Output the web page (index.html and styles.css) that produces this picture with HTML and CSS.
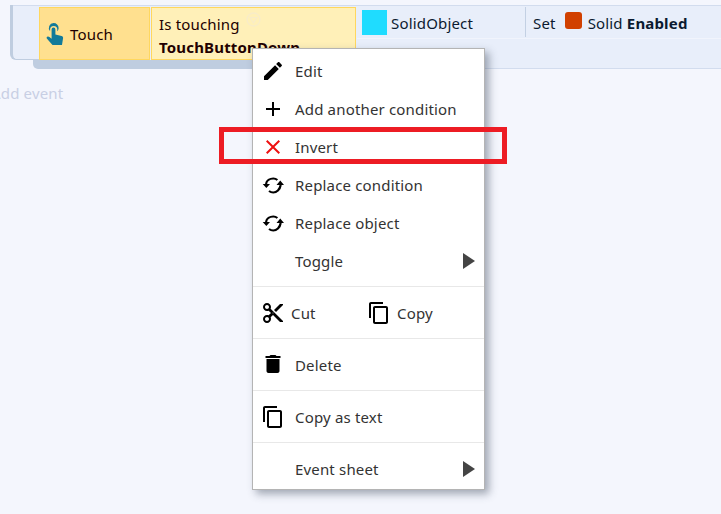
FILE: index.html
```html
<!DOCTYPE html>
<html lang="en">
<head>
<meta charset="utf-8">
<title>Event sheet</title>
<link rel="stylesheet" href="styles.css">
</head>
<body>
<div class="event">
  <div class="event-left">
    <div class="event-top">
      <div class="gutter"></div>
      <div class="conditions">
        <div class="cond-object">
          <svg class="touch-icon" width="20" height="24" viewBox="0 0 20 24"><path fill="#137a99" d="M7.600 1a5 5 0 0 1 5 5c0 1.400-.5 2.500-1.300 3.300V7.600a3.500 3.500 0 1 0-7.200 0v1.700A5 5 0 0 1 7.600 1z"/><path fill="#137a99" d="M5.600 7.400a1.900 1.900 0 0 1 3.800 0v5l6.200 1.500c1 .3 1.600 1.100 1.500 2.100L16 23H6.500L1 16.700c-.6-.8-.4-1.600.3-2 .7-.4 1.500-.2 2.100.3l2.200 1.800z"/></svg>
          <span>Touch</span>
        </div>
        <div class="cond-params">
          <div class="cond-line">Is touching<svg class="cond-flag" width="15" height="15" viewBox="0 0 15 15"><circle cx="7.500" cy="7.500" r="6.500" fill="none" stroke="#f8ecc8" stroke-width="1.300"/><path d="M4 5.500h7l-3.500 5.500z" fill="none" stroke="#f8ecc8" stroke-width="1.200"/></svg></div>
          <div class="cond-line"><b>TouchButtonDown</b></div>
        </div>
      </div>
    </div>
    <div class="event-bar"></div>
  </div>
  <div class="event-right">
    <div class="action-row">
      <div class="action-object"><span class="swatch"></span><span class="action-text">SolidObject</span></div>
      <div class="action-params"><span class="action-text">Set</span><span class="solid-icon"></span><span class="action-text">Solid <b>Enabled</b></span></div>
    </div>
  </div>
</div>
<div class="add-event">Add event</div>

<div class="menu">
  <section class="menu-first">
    <div class="item"><span class="ico"><svg width="24" height="24" viewBox="0 0 24 24"><path d="M3 17.250V21h3.750L17.810 9.940l-3.750-3.750L3 17.250zM20.710 7.040c.39-.39.39-1.020 0-1.410l-2.340-2.340c-.39-.39-1.020-.39-1.410 0l-1.830 1.830 3.750 3.750 1.830-1.830z"/></svg></span>Edit</div>
    <div class="item"><span class="ico"><svg width="24" height="24" viewBox="0 0 24 24"><path d="M19 13h-6v6h-2v-6H5v-2h6V5h2v6h6v2z"/></svg></span>Add another condition</div>
    <div class="item item-marked"><span class="ico"><svg width="24" height="24" viewBox="0 0 24 24"><path fill="#ee1111" d="M19 6.410L17.590 5 12 10.590 6.410 5 5 6.410 10.590 12 5 17.590 6.410 19 12 13.410 17.590 19 19 17.590 13.410 12z"/></svg></span>Invert<span class="marker"></span></div>
    <div class="item"><span class="ico"><svg width="24" height="24" viewBox="0 0 24 24"><path fill="none" stroke="#000" stroke-width="2.200" d="M5 11C5.500 7.500 9 5.500 12.300 5.500C13.800 5.500 15.200 6 16.400 7M19.700 12C19 16.500 15.500 19.500 12.300 19.500C10.800 19.500 9.300 19 8 18"/><path d="M1.700 11h7.300l-3.650 4zM15.500 12h7.500l-3.750-4.500z"/></svg></span>Replace condition</div>
    <div class="item"><span class="ico"><svg width="24" height="24" viewBox="0 0 24 24"><path fill="none" stroke="#000" stroke-width="2.200" d="M5 11C5.500 7.500 9 5.500 12.300 5.500C13.800 5.500 15.200 6 16.400 7M19.700 12C19 16.500 15.500 19.500 12.300 19.500C10.800 19.500 9.300 19 8 18"/><path d="M1.700 11h7.300l-3.650 4zM15.500 12h7.500l-3.750-4.500z"/></svg></span>Replace object</div>
    <div class="item"><span class="ico"></span>Toggle<span class="arrow"></span></div>
  </section>
  <section>
    <div class="item-pair">
      <div class="item pair-cut"><span class="ico ico-tight"><svg width="24" height="24" viewBox="0 0 24 24"><path d="M9.640 7.640c.23-.5.36-1.050.36-1.640 0-2.210-1.790-4-4-4S2 3.790 2 6s1.790 4 4 4c.59 0 1.140-.13 1.640-.36L10 12l-2.360 2.360C7.140 14.130 6.590 14 6 14c-2.210 0-4 1.790-4 4s1.790 4 4 4 4-1.790 4-4c0-.59-.13-1.140-.36-1.640L12 14l7 7h3v-1L9.640 7.640zM6 8c-1.100 0-2-.89-2-2s.9-2 2-2 2 .89 2 2-.9 2-2 2zm0 12c-1.100 0-2-.89-2-2s.9-2 2-2 2 .89 2 2-.9 2-2 2zm6-7.500c-.28 0-.5-.22-.5-.5s.22-.5.5-.5.5.22.5.5-.22.5-.5.5zM19 3l-6 6 2 2 7-7V3z"/></svg></span>Cut</div>
      <div class="item"><span class="ico ico-tight"><svg width="24" height="24" viewBox="0 0 24 24"><path d="M16 1H4c-1.100 0-2 .9-2 2v14h2V3h12V1zm3 4H8c-1.100 0-2 .9-2 2v14c0 1.100.9 2 2 2h11c1.100 0 2-.9 2-2V7c0-1.100-.9-2-2-2zm0 16H8V7h11v14z"/></svg></span>Copy</div>
    </div>
  </section>
  <section>
    <div class="item"><span class="ico"><svg width="24" height="24" viewBox="0 1 24 24"><path d="M5.500 19c0 1.100.9 2 2 2h9c1.100 0 2-.9 2-2V7h-13v12zM19.500 4h-4l-1-1h-5l-1 1h-4v2h15V4z"/></svg></span>Delete</div>
  </section>
  <section>
    <div class="item"><span class="ico"><svg width="24" height="24" viewBox="0 0 24 24"><path d="M16 1H4c-1.100 0-2 .9-2 2v14h2V3h12V1zm3 4H8c-1.100 0-2 .9-2 2v14c0 1.100.9 2 2 2h11c1.100 0 2-.9 2-2V7c0-1.100-.9-2-2-2zm0 16H8V7h11v14z"/></svg></span>Copy as text</div>
  </section>
  <section>
    <div class="item"><span class="ico"></span>Event sheet<span class="arrow"></span></div>
  </section>
</div>
</body>
</html>
```
FILE: styles.css
```css
* { box-sizing: border-box; }
html, body { height: 100%; }
body {
  margin: 0;
  padding-top: 5px;
  overflow: hidden;
  position: relative;
  background: #f4f6fd;
  color: #111;
  font: 15px/22px "Noto Sans", "Open Sans", sans-serif;
  letter-spacing: .17px;
}
.event { display: flex; margin-left: 10px; height: 64px; }
.event-left { width: 347px; display: flex; flex-direction: column; }
.event-top { display: flex; height: 55px; background: #e8eefa; border-top: 1px solid #d2dcee; border-radius: 0 0 0 6px; }
.gutter { width: 29px; border-left: 3px solid #bfcde0; border-bottom: 1px solid #bfcde0; border-radius: 0 0 0 6px; margin-top: -1px; }
.event-bar { margin-left: 23px; height: 9px; background: #bfcde0; border-radius: 0 0 0 5px; }
.conditions { display: flex; gap: 1px; padding-top: 1px; height: 54px; }
.cond-object { width: 111px; display: flex; align-items: center; gap: 4px; padding-left: 6px; background: #ffe08f; border: 1px solid #ffd75e; color: #200; }
.cond-params { width: 205px; padding: 4px 6px 0 7px; background: #fff0b8; border: 1px solid #ffd75e; color: #200; }
.cond-line { height: 23px; display: flex; align-items: center; white-space: nowrap; }
.cond-flag { margin: -9px 0 0 6px; }
.event-right { flex: 1; background: #e8eefa; border-top: 1px solid #d2dcee; border-bottom: 1px solid #d2dcee; }
.action-row { height: 33px; display: flex; border-bottom: 1px solid #f1f4fc; }
.action-object { width: 168px; display: flex; align-items: center; gap: 4px; padding-left: 5px; }
.swatch { width: 25px; height: 25px; background: #1fdcff; }
.action-text { padding-top: 2px; color: #0b1a30; white-space: pre; }
.action-params { margin: 1px 0; padding-left: 7px; border-left: 1px solid #c3d0e3; display: flex; align-items: center; }
.solid-icon { width: 17px; height: 17px; margin: -3px 6px 0 9px; background: #d14000; border-radius: 3px; }
.add-event { margin: 13px 0 0 -9px; color: #c8cfe4; }
.menu {
  position: absolute;
  left: 252px;
  top: 48px;
  width: 233px;
  height: 442px;
  background: #fff;
  border: 1px solid #b4b4b4;
  box-shadow: 4px 4px 8px rgba(60, 70, 90, .45);
  color: #333;
}
section { padding: 7px 0 6px; border-top: 1px solid #e8e8e8; }
section.menu-first { padding: 3px 0 6px; border-top: 0; }
.item { position: relative; height: 38px; display: flex; align-items: center; padding-bottom: 1px; }
.ico { width: 42px; padding-left: 8px; margin-bottom: -1px; display: flex; align-items: center; flex: none; }
.ico-tight { width: 38px; }
.item-pair { display: flex; }
.pair-cut { width: 106px; }
.arrow { position: absolute; right: 9px; top: 11px; border-left: 12px solid #444; border-top: 8px solid transparent; border-bottom: 8px solid transparent; }
.marker { position: absolute; left: -34px; right: -23px; top: -1px; height: 37px; border: 5px solid #ed1c24; }
```
